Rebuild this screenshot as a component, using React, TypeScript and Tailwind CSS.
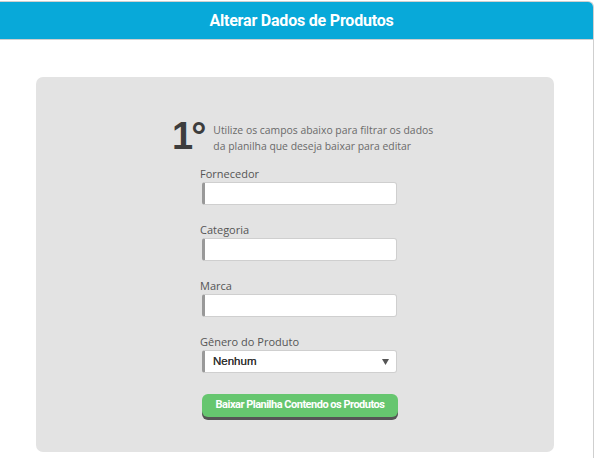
import React from "react";

function Field({ label, children }: { label: string; children?: React.ReactNode }) {
  return (
    <div className="flex flex-col">
      <div className="text-[11px] leading-[14px] text-[#555] font-['Open_Sans',sans-serif] h-[14px]">{label}</div>
      <div className="mt-[1px] ml-[2px] w-[195px] h-[23px] bg-white rounded-[3px] border border-[#cfcfcf] border-l-[3px] border-l-[#999] flex items-center">
        {children}
      </div>
    </div>
  );
}

export default function App() {
  return (
    <div className="w-[595px] h-[458px] bg-white overflow-hidden font-['Open_Sans',sans-serif]">
      <div className="mt-px w-[594px] h-[457px] border-t border-r border-[#cfcfcf] rounded-tr-[6px] overflow-hidden flex flex-col">
        <div className="h-[38px] bg-[#08a9d9] border-b border-[#cfcfcf] flex items-center justify-center pl-[10px] shrink-0">
          <span className="text-white font-bold text-[16px] font-['Roboto',sans-serif] tracking-[-0.2px]">
            Alterar Dados de Produtos
          </span>
        </div>
        <div className="pt-[37px] pl-[36px]">
          <div className="w-[518px] h-[375px] bg-[#e3e3e3] rounded-[7px] pt-[40px] flex flex-col">
            <div className="flex items-start ml-[136px]">
              <div className="text-[38px] leading-[39px] font-bold text-[#3d3d3d] font-['Liberation_Sans',sans-serif] tracking-[-2px]">
                1°
              </div>
              <div className="ml-[9px] pt-[5px] text-[10.4px] leading-[16px] text-[#6a6a6a] font-['Open_Sans',sans-serif]">
                Utilize os campos abaixo para filtrar os dados
                <br />
                da planilha que deseja baixar para editar
              </div>
            </div>
            <div className="ml-[164px] mt-[11px] flex flex-col gap-[18px]">
              <Field label="Fornecedor" />
              <Field label="Categoria" />
              <Field label="Marca" />
              <Field label="Gênero do Produto">
                <div className="flex-1 flex items-center justify-between pl-[8px] pr-[7px]">
                  <span className="text-[11.5px] text-[#333] font-['Liberation_Sans',sans-serif] [text-shadow:0_0_0.3px_#333]">Nenhum</span>
                  <svg width="7" height="6" viewBox="0 0 7 6">
                    <path d="M0 0 L7 0 L3.5 6 Z" fill="#555" />
                  </svg>
                </div>
              </Field>
            </div>
            <div className="ml-[166px] mt-[21px]">
              <div className="w-[196px] h-[23px] bg-[#66c66f] rounded-[6px] shadow-[0_3px_0_#555] flex items-center justify-center">
                <span className="text-white font-bold text-[11px] font-['Roboto',sans-serif] tracking-[-0.5px]">
                  Baixar Planilha Contendo os Produtos
                </span>
              </div>
            </div>
          </div>
        </div>
      </div>
    </div>
  );
}
